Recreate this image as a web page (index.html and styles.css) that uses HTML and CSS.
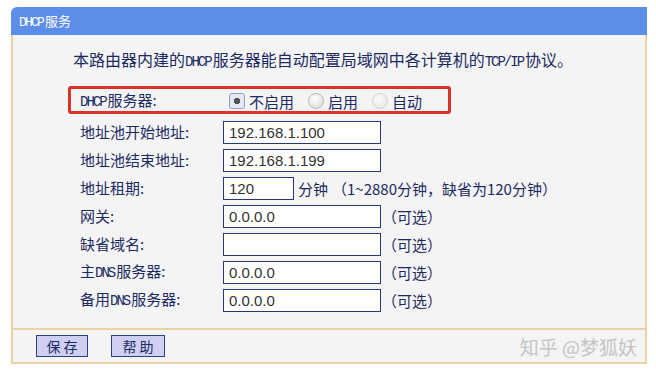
FILE: index.html
```html
<!DOCTYPE html>
<html lang="zh-CN">
<head>
    <meta charset="UTF-8">
    <title>DHCP服务</title>
    <link rel="stylesheet" href="styles.css">
</head>
<body>
    <div class="panel">
        <div class="panel-head"><span class="en">DHCP</span>服务</div>

        <div class="panel-body">
            <p class="desc">本路由器内建的<span class="en">DHCP</span>服务器能自动配置局域网中各计算机的<span class="en">TCP/IP</span>协议。</p>

            <div class="mode-box">
                <span class="label"><span class="en">DHCP</span>服务器:</span>
                <div class="radios">
                    <label class="radio"><span class="dot checked"></span>不启用</label>
                    <label class="radio"><span class="dot"></span>启用</label>
                    <label class="radio"><span class="dot faint"></span>自动</label>
                </div>
            </div>

            <div class="form">
                <span class="label">地址池开始地址:</span>
                <div class="field"><span class="input">192.168.1.100</span></div>

                <span class="label">地址池结束地址:</span>
                <div class="field"><span class="input">192.168.1.199</span></div>

                <span class="label">地址租期:</span>
                <div class="field"><span class="input short">120</span><span class="unit">分钟</span><span class="hint">（1~2880分钟，缺省为120分钟）</span></div>

                <span class="label">网关:</span>
                <div class="field"><span class="input">0.0.0.0</span><span class="opt">（可选）</span></div>

                <span class="label">缺省域名:</span>
                <div class="field"><span class="input"></span><span class="opt">（可选）</span></div>

                <span class="label">主<span class="en">DNS</span>服务器:</span>
                <div class="field"><span class="input">0.0.0.0</span><span class="opt">（可选）</span></div>

                <span class="label">备用<span class="en">DNS</span>服务器:</span>
                <div class="field"><span class="input">0.0.0.0</span><span class="opt">（可选）</span></div>
            </div>
        </div>

        <div class="panel-foot">
            <button class="btn">保 存</button>
            <button class="btn wide">帮 助</button>
            <span class="watermark">知乎 @梦狐妖</span>
        </div>
    </div>
</body>
</html>
```

FILE: styles.css
```css
body {
    margin: 0;
    background: #ffffff;
    font-family: "Noto Sans CJK SC", "Noto Sans", sans-serif;
    color: #1c2a62;
}

/* narrow latin glyphs, like the router's bitmap font */
.en {
    font-family: "Liberation Mono", monospace;
    font-size: 14px;
    letter-spacing: -2px;
    margin-right: 2px;
}

.panel {
    position: relative;
    width: 636px;
    margin: 7px 0 0 11px;
}

.panel-head {
    height: 28px;
    line-height: 28px;
    padding-left: 8px;
    background: #5b8de9;
    border-top-left-radius: 6px;
    color: #ffffff;
    font-size: 13px;
}
.panel-head .en {
    font-size: 13px;
    letter-spacing: -1.8px;
}

.panel-body {
    background: #f4f4f4;
    border-left: 2px solid #ecd2a4;
    border-right: 2px solid #ecd2a4;
    padding: 12px 0 14px 0;
}

.desc {
    margin: 0 0 12px 60px;
    font-size: 16px;
    line-height: 24px;
}

.mode-box {
    display: grid;
    grid-template-columns: 149px auto;
    align-items: center;
    width: 368px;
    height: 22px;
    margin-left: 55px;
    padding-left: 9px;
    border: 3px solid #d8322a;
    border-radius: 3px;
}

.label {
    font-size: 15px;
    line-height: 22px;
}

.radios {
    display: flex;
    align-items: center;
}

.radio {
    display: flex;
    align-items: center;
    font-size: 15px;
    margin-right: 14px;
}

.dot {
    width: 14px;
    height: 14px;
    margin-right: 4px;
    border: 1px solid #b8b8b8;
    border-radius: 50%;
    background: radial-gradient(circle at 40% 35%, #ffffff, #d6d6d6);
}
.dot.checked {
    border-radius: 3px;
    border-color: #8fa0c8;
    background: radial-gradient(circle, #555 0 3px, #e4e8f2 3.5px);
}
.dot.faint {
    border-color: #d4d4d4;
    background: radial-gradient(circle at 40% 35%, #fafafa, #e2e2e2);
}

.form {
    display: grid;
    grid-template-columns: 143px auto;
    grid-auto-rows: 28px;
    align-items: center;
    margin: 4px 0 0 67px;
}

.field {
    display: flex;
    align-items: center;
}

.input {
    box-sizing: border-box;
    width: 158px;
    height: 23px;
    padding-left: 5px;
    border: 1px solid #23397a;
    background: #ffffff;
    color: #333333;
    font-family: "Liberation Sans", sans-serif;
    font-size: 15px;
    line-height: 21px;
}
.input.short {
    width: 71px;
}

.unit {
    margin-left: 4px;
    font-size: 15px;
}

.hint {
    margin-left: 4px;
    font-size: 15px;
}

.opt {
    margin-left: 1px;
    font-size: 15px;
}

.panel-foot {
    display: flex;
    align-items: center;
    gap: 23px;
    height: 32px;
    padding-left: 23px;
    background: #f4f4f4;
    border: 2px solid #ecd2a4;
}

.btn {
    width: 52px;
    height: 22px;
    padding: 0;
    border: 1px solid #2f3f86;
    background: #cfd0f1;
    color: #1c2a62;
    font-family: "Noto Sans CJK SC", sans-serif;
    font-size: 14px;
    line-height: 20px;
}
.btn.wide {
    width: 54px;
}

.watermark {
    position: absolute;
    right: 10px;
    bottom: 4px;
    color: #c4c4c4;
    font-size: 19px;
}
```
